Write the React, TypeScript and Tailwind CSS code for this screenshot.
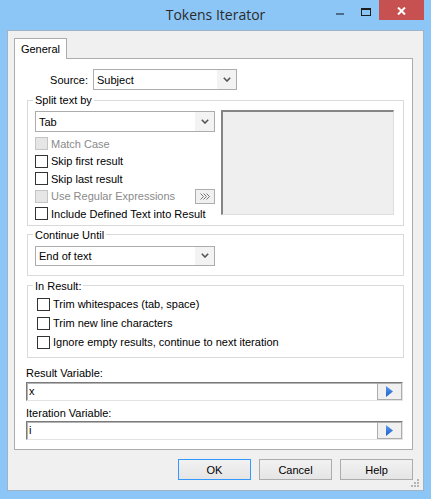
import React from 'react'

function Chevron() {
  return (
    <svg width="8" height="5" viewBox="0 0 8 5">
      <path d="M0.8 0.8 L4 4 L7.2 0.8" fill="none" stroke="#555" strokeWidth="1.6" />
    </svg>
  )
}

function Combo({ value, className }: { value: string; className: string }) {
  return (
    <div className={`flex border border-[#acacac] bg-white ${className}`}>
      <span className="flex-1 pl-[3px] flex items-center">{value}</span>
      <span className="w-[19px] flex items-center justify-center bg-[#f3f3f3]">
        <Chevron />
      </span>
    </div>
  )
}

interface CheckProps {
  label: string
  disabled?: boolean
  className?: string
  children?: React.ReactNode
}

function Check({ label, disabled, className = 'h-[17.5px]', children }: CheckProps) {
  return (
    <div className={`flex items-center ${className}`}>
      <span
        className={`block w-[13px] h-[13px] border ${
          disabled ? 'border-[#c4c4c4] bg-[#e6e6e6]' : 'border-[#333] bg-white'
        }`}
      />
      <span className={`ml-[3px] ${disabled ? 'text-[#8a8a8a]' : 'text-black'}`}>{label}</span>
      {children}
    </div>
  )
}

function VarInput({ value }: { value: string }) {
  return (
    <div className="ml-[11px] mr-[9px] h-[19px] flex border border-t-[#7a7a7a] border-l-[#7a7a7a] border-r-[#e3e3e3] border-b-[#e3e3e3] bg-white shadow-[inset_1px_1px_0_#b4b4b4]">
      <span className="flex-1 pl-[2px] flex items-center">{value}</span>
      <button className="w-[25px] h-[17px] border border-[#acacac] bg-[#f0f0f0] flex items-center justify-center">
        <svg width="7" height="11" viewBox="0 0 7 11">
          <defs>
            <linearGradient id={`g-${value}`} x1="0" y1="0" x2="0" y2="1">
              <stop offset="0" stopColor="#5b9bf0" />
              <stop offset="1" stopColor="#1c5fc8" />
            </linearGradient>
          </defs>
          <polygon points="0,0 7,5.5 0,11" fill={`url(#g-${value})`} />
        </svg>
      </button>
    </div>
  )
}

export default function App() {
  return (
    <div className="w-[431px] h-[499px] bg-[#8cc6f6] font-['Liberation_Sans',Arial,sans-serif] text-[11px] leading-[14px] text-black select-none">
      {/* title bar */}
      <div className="relative h-[30px] flex items-start justify-end pr-[7px]">
        <div className="absolute inset-0 flex items-center justify-center font-['Open_Sans',sans-serif] text-[14px] text-[#2b2b2b]">
          Tokens Iterator
        </div>
        <div className="relative w-[26px] h-[20px] flex justify-center pt-[13px]">
          <span className="block w-[8px] h-[2px] bg-[#4d6b88]" />
        </div>
        <div className="relative w-[26px] h-[20px] flex justify-center pt-[8px]">
          <span className="block w-[10px] h-[8px] border border-t-2 border-[#1e1e1e]" />
        </div>
        <div className="relative w-[45px] h-[20px] bg-[#c75050] flex items-center justify-center pt-[1px]">
          <svg width="9" height="8" viewBox="0 0 9 8">
            <path d="M1 0.5 L8 7.5 M8 0.5 L1 7.5" stroke="#fff" strokeWidth="2" />
          </svg>
        </div>
      </div>

      {/* client area */}
      <div className="relative ml-[7px] w-[417px] h-[461px] border border-[#9fb3c6] bg-[#f0f0f0] pt-[7px] pl-[6px]">
        <div className="flex">
          <div className="relative z-10 -mb-px w-[53px] h-[21px] border border-b-0 border-[#acacac] bg-white flex items-center justify-center">
            General
          </div>
        </div>

        <div className="w-[399px] h-[392px] border border-[#acacac] bg-white pt-[10px]">
          {/* source */}
          <div className="flex items-center">
            <span className="w-[73px] text-right">Source:</span>
            <Combo value="Subject" className="ml-[5px] w-[144px] h-[21px]" />
          </div>

          {/* split text by */}
          <fieldset className="ml-[12px] mr-[8px] mt-[3px] border border-[#d9d9d9] px-[7px] pt-[4px] pb-[2px]">
            <legend className="-ml-[2px] px-[2px] leading-[14px]">Split text by</legend>
            <div className="flex items-start">
              <div className="w-[180px]">
                <Combo value="Tab" className="w-full h-[21px]" />
                <div className="mt-[3px]">
                  <Check label="Match Case" disabled />
                  <Check label="Skip first result" />
                  <Check label="Skip last result" />
                  <Check label="Use Regular Expressions" disabled>
                    <button className="ml-auto w-[20px] h-[15px] border border-[#adadad] bg-[#f0f0f0] flex items-center justify-center">
                      <svg width="11" height="7" viewBox="0 0 11 7">
                        <path
                          d="M0.5 0.5 L3.5 3.5 L0.5 6.5 M3.5 0.5 L6.5 3.5 L3.5 6.5 M6.5 0.5 L9.5 3.5 L6.5 6.5"
                          fill="none"
                          stroke="#777"
                          strokeWidth="1"
                        />
                      </svg>
                    </button>
                  </Check>
                  <Check label="Include Defined Text into Result" />
                </div>
              </div>
              <div className="ml-[6px] -mt-px w-[173px] h-[105px] bg-[#efefef] border-t-2 border-l-2 border-r border-b border-t-[#858585] border-l-[#858585] border-r-[#dedede] border-b-[#dedede]" />
            </div>
          </fieldset>

          {/* continue until */}
          <fieldset className="ml-[12px] mr-[8px] mt-[2px] border border-[#d9d9d9] px-[7px] pt-[4px] pb-[9px]">
            <legend className="-ml-[2px] px-[2px] leading-[14px]">Continue Until</legend>
            <Combo value="End of text" className="w-[180px] h-[20px]" />
          </fieldset>

          {/* in result */}
          <fieldset className="ml-[12px] mr-[8px] mt-[3px] border border-[#d9d9d9] pl-[9px] pr-[7px] pt-[2px] pb-[5px]">
            <legend className="-ml-[4px] px-[2px] leading-[14px]">In Result:</legend>
            <Check label="Trim whitespaces (tab, space)" className="h-[19px]" />
            <Check label="Trim new line characters" className="h-[19px]" />
            <Check label="Ignore empty results, continue to next iteration" className="h-[19px]" />
          </fieldset>

          <div className="ml-[11px] mt-[8px]">Result Variable:</div>
          <div className="mt-[2px]">
            <VarInput value="x" />
          </div>
          <div className="ml-[11px] mt-[5px]">Iteration Variable:</div>
          <div className="mt-[1px]">
            <VarInput value="i" />
          </div>
        </div>

        {/* buttons */}
        <div className="w-[399px] mt-[9px] flex justify-end gap-[8px]">
          <button className="w-[73px] h-[21px] border border-[#3399ff] bg-gradient-to-b from-[#f2f2f2] to-[#e5e5e5]">OK</button>
          <button className="w-[73px] h-[21px] border border-[#acacac] bg-gradient-to-b from-[#f2f2f2] to-[#e5e5e5]">Cancel</button>
          <button className="w-[73px] h-[21px] border border-[#acacac] bg-gradient-to-b from-[#f2f2f2] to-[#e5e5e5]">Help</button>
        </div>

        {/* size grip */}
        <svg className="absolute right-[3px] bottom-[2px]" width="9" height="9" viewBox="0 0 9 9">
          <rect x="6" y="0" width="2" height="2" fill="#b5b5b5" />
          <rect x="3" y="3" width="2" height="2" fill="#b5b5b5" />
          <rect x="6" y="3" width="2" height="2" fill="#b5b5b5" />
          <rect x="0" y="6" width="2" height="2" fill="#b5b5b5" />
          <rect x="3" y="6" width="2" height="2" fill="#b5b5b5" />
          <rect x="6" y="6" width="2" height="2" fill="#b5b5b5" />
        </svg>
      </div>
    </div>
  )
}
